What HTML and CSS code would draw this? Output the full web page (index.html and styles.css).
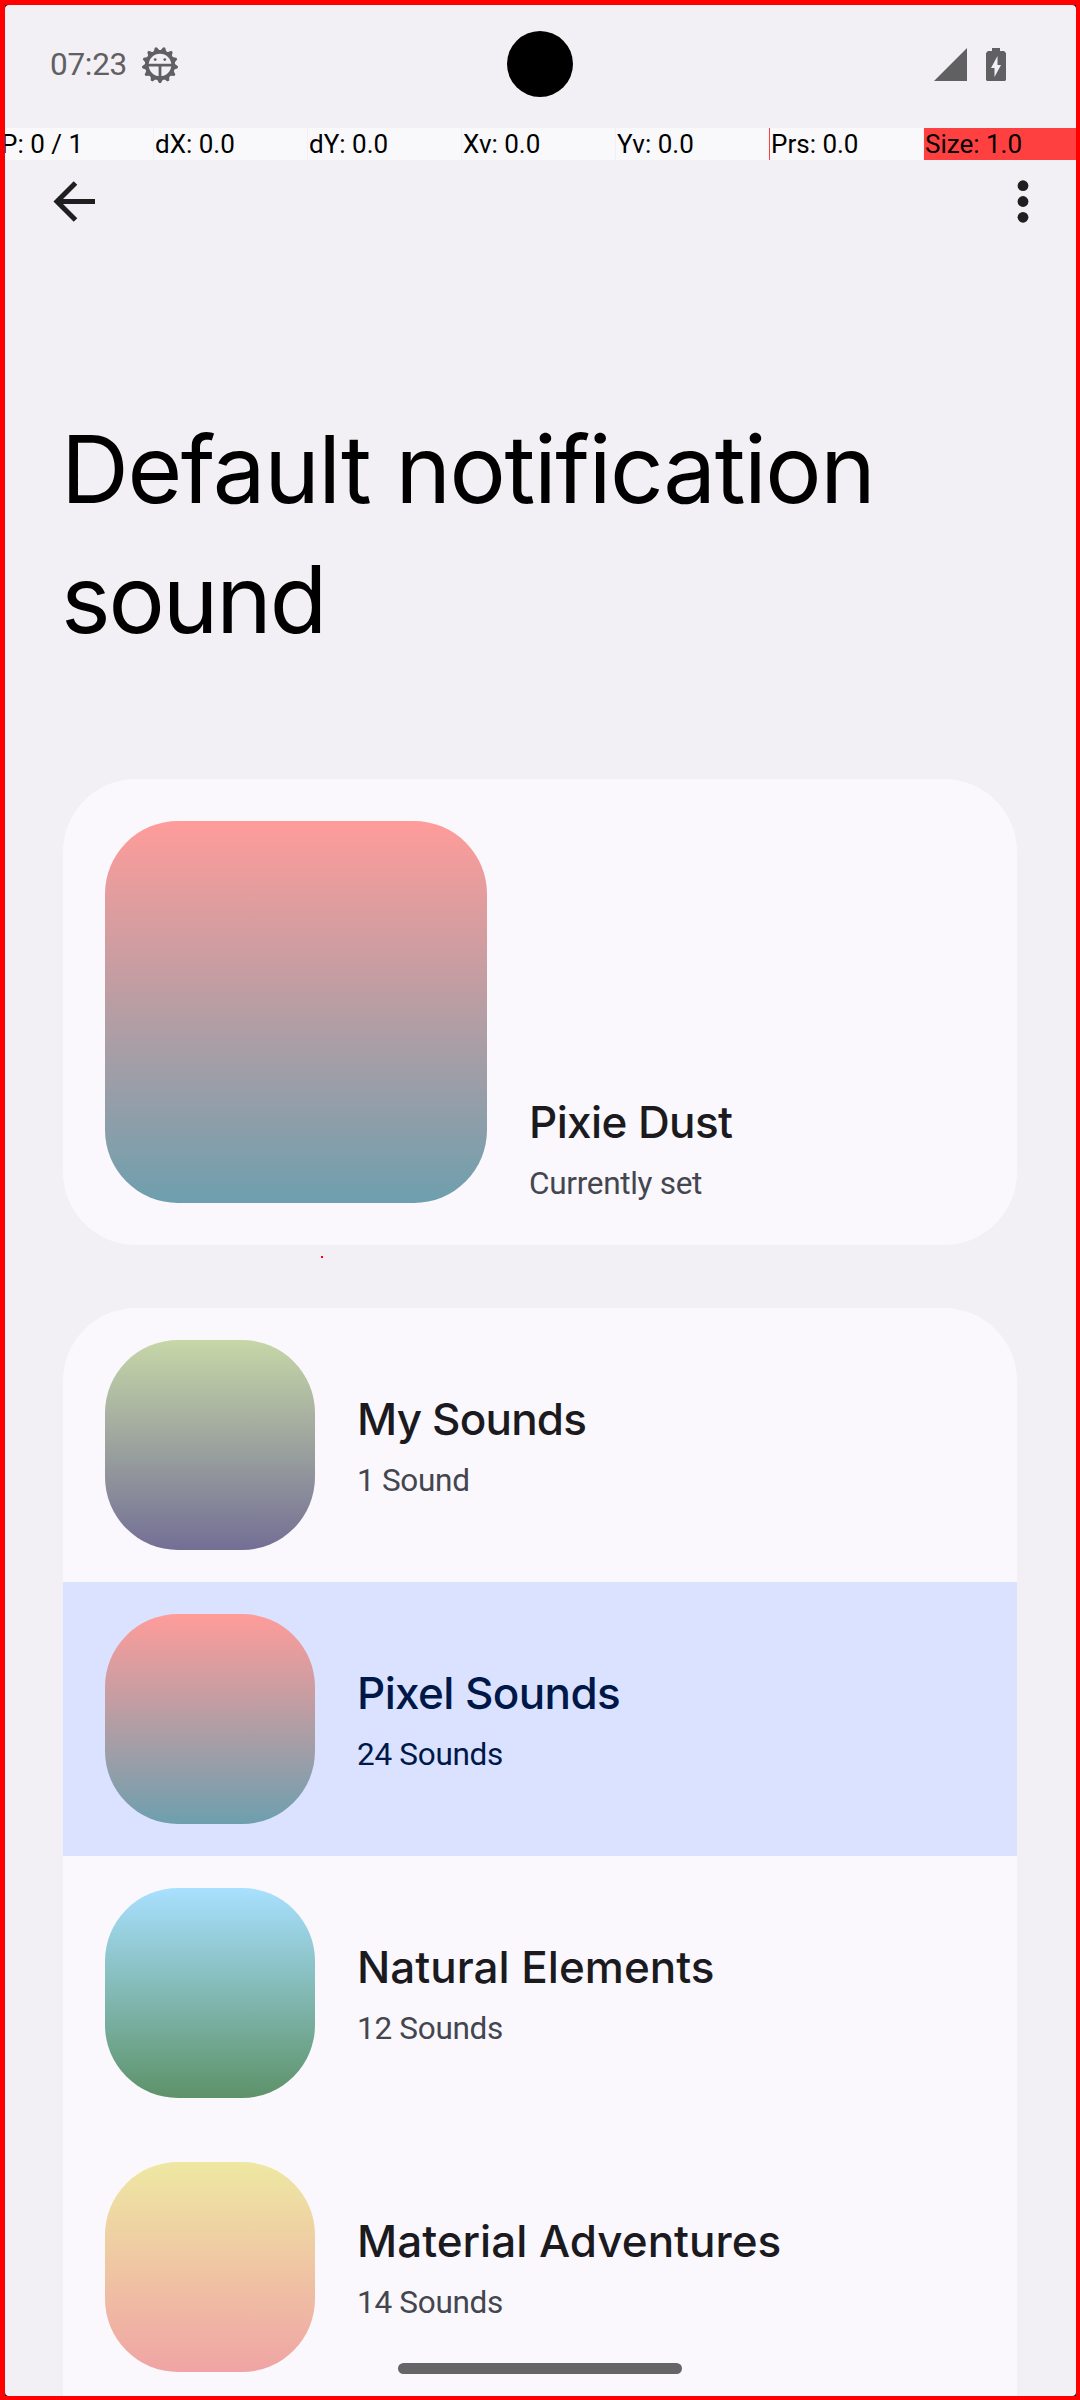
FILE: index.html
```html
<!DOCTYPE html>
<html lang="en">
<head>
<meta charset="utf-8">
<title>Default notification sound</title>
<link rel="stylesheet" href="styles.css">
</head>
<body>
<div class="screen">
  <header class="status">
    <span class="clock">07:23</span>
    <svg class="gear" viewBox="0 0 38 38" width="38" height="38" fill="#606062">
      <defs><path id="tooth" d="M15.6 32.5L18 37h2L22.4 32.5z"/></defs>
      <use href="#tooth"/>
      <use href="#tooth" transform="rotate(27.7 19 19)"/><use href="#tooth" transform="rotate(-27.7 19 19)"/>
      <use href="#tooth" transform="rotate(55.4 19 19)"/><use href="#tooth" transform="rotate(-55.4 19 19)"/>
      <use href="#tooth" transform="rotate(83.1 19 19)"/><use href="#tooth" transform="rotate(-83.1 19 19)"/>
      <use href="#tooth" transform="rotate(110.8 19 19)"/><use href="#tooth" transform="rotate(-110.8 19 19)"/>
      <use href="#tooth" transform="rotate(138.5 19 19)"/><use href="#tooth" transform="rotate(-138.5 19 19)"/>
      <use href="#tooth" transform="rotate(166.2 19 19)"/><use href="#tooth" transform="rotate(-166.2 19 19)"/>
      <circle cx="19" cy="19" r="13.2" fill="none" stroke="#606062" stroke-width="3.8"/>
      <path d="M7 19.2H31M19 19V32" stroke="#606062" stroke-width="2.8"/>
      <circle cx="14.2" cy="13.6" r="1.4"/><circle cx="23.8" cy="13.6" r="1.4"/>
    </svg>
    <span class="spacer"></span>
    <svg class="signal" viewBox="0 0 33 33" width="33" height="33"><path d="M0 33L33 0V33Z" fill="#606062"/></svg>
    <svg class="battery" viewBox="0 0 20 33" width="20" height="33">
      <path d="M6 0h8v3h4l2 2v27l-1 1H1l-1-1V5l2-2h4z" fill="#606062"/>
      <path d="M11.5 8L5 20h3.5v9L15 17h-3.5z" fill="#f2f0f5"/>
    </svg>
  </header>
  <nav class="toolbar">
    <svg viewBox="0 0 42 44" width="42" height="44"><path d="M22.5 3L4 21.5L22.5 40M4 21.5H42" fill="none" stroke="#1f1f1f" stroke-width="5"/></svg>
    <svg viewBox="0 0 12 44" width="12" height="44" fill="#1f1f1f"><circle cx="6" cy="5.7" r="5.4"/><circle cx="6" cy="21.5" r="5.4"/><circle cx="6" cy="37.3" r="5.4"/></svg>
  </nav>
  <h1 class="title"><span class="line-wide">Default notification</span><br>sound</h1>
  <section class="current">
    <div class="art art-large coral"></div>
    <div class="label"><div class="name snug">Pixie Dust</div><div class="detail">Currently set</div></div>
  </section>
  <section class="list">
    <div class="row"><div class="art olive"></div><div class="label"><div class="name">My Sounds</div><div class="detail">1 Sound</div></div></div>
    <div class="row selected"><div class="art coral"></div><div class="label"><div class="name snug">Pixel Sounds</div><div class="detail">24 Sounds</div></div></div>
    <div class="row"><div class="art sky"></div><div class="label"><div class="name loose">Natural Elements</div><div class="detail">12 Sounds</div></div></div>
    <div class="row"><div class="art sand"></div><div class="label"><div class="name loose">Material Adventures</div><div class="detail">14 Sounds</div></div></div>
  </section>
  <div class="pointer-bar">
    <span>P: 0 / 1</span><span>dX: 0.0</span><span>dY: 0.0</span><span>Xv: 0.0</span><span>Yv: 0.0</span><span class="prs">Prs: 0.0</span><span class="size">Size: 1.0</span>
  </div>
  <div class="camera"></div>
  <div class="touch-dot"></div>
  <div class="home-handle"></div>
  <div class="frame"></div>
</div>
</body>
</html>
```
FILE: styles.css
```css
* { box-sizing: border-box; }
body { margin: 0; background: #000; font-family: Roboto, sans-serif; }
.screen { position: relative; width: 1080px; height: 2400px; overflow: hidden; background: #f2f0f5; display: flex; flex-direction: column; }
.screen > * { flex-shrink: 0; }
.status { height: 128px; padding: 0 74px 0 50px; display: flex; align-items: center; color: #606062; }
.clock { font-size: 31.5px; line-height: 40px; letter-spacing: -0.3px; margin-top: 2px; }
.gear { margin: 1px 0 0 14px; }
.spacer { flex: 1; }
.battery { margin-left: 19px; }
.toolbar { height: 147px; padding: 52px 51px 0 53px; display: flex; justify-content: space-between; align-items: flex-start; }
.title { margin: 129px 0 0 61px; height: 375px; font: 400 94px/130px Inter, sans-serif; letter-spacing: -2.1px; color: #000; }
.line-wide { letter-spacing: -1.4px; }
.current { margin: 0 63px 63px; height: 466px; padding: 42px; border-radius: 73px; background: #faf8fd; display: flex; gap: 42px; align-items: flex-end; }
.list { margin: 0 63px; border-radius: 73px 73px 0 0; background: #faf8fd; overflow: hidden; }
.row { height: 274px; padding: 32px 42px; display: flex; gap: 42px; align-items: center; }
.art { width: 210px; height: 210px; flex: none; border-radius: 73px; }
.art-large { width: 382px; height: 382px; }
.coral { background: linear-gradient(#ff9c9a, #6e9fae); }
.olive { background: linear-gradient(#c6d7a7, #736f95); }
.sky { background: linear-gradient(#a8e0ff, #5d9269); }
.sand { background: linear-gradient(#eee8a2, #f0a4a4); }
.name { font: 500 44px/60px Inter, sans-serif; letter-spacing: -0.8px; color: #1b1b1f; }
.snug { letter-spacing: -0.6px; }
.loose { letter-spacing: 0; }
.detail { margin-top: 11px; font-size: 31.5px; line-height: 42px; letter-spacing: -0.3px; color: #44464f; }
.current .detail { margin-bottom: -2px; }
.selected { background: #dae2ff; }
.selected .name, .selected .detail { color: #001848; }
.pointer-bar { position: absolute; top: 128px; left: 0; height: 32px; display: flex; gap: 1px; font-size: 26px; line-height: 32px; color: #000; }
.pointer-bar span { width: 153px; padding-left: 1px; background: #f9f9fb; white-space: nowrap; }
.pointer-bar .prs { box-shadow: -1px 0 #ff4040; }
.pointer-bar .size { width: 156px; background: #ff4040; }
.camera { position: absolute; left: 507px; top: 31px; width: 66px; height: 66px; border-radius: 50%; background: #000; }
.touch-dot { position: absolute; left: 321px; top: 1256px; width: 2px; height: 2px; background: #f00; }
.home-handle { position: absolute; left: 398px; top: 2363px; width: 284px; height: 11px; border-radius: 6px; background: #656567; }
.frame { position: absolute; inset: 0; border: solid #f00; border-width: 5px 4px 4px 5px; overflow: hidden; }
.frame::before { content: ""; position: absolute; inset: 0; border-radius: 4px; box-shadow: 0 0 0 3px #000; }
```
